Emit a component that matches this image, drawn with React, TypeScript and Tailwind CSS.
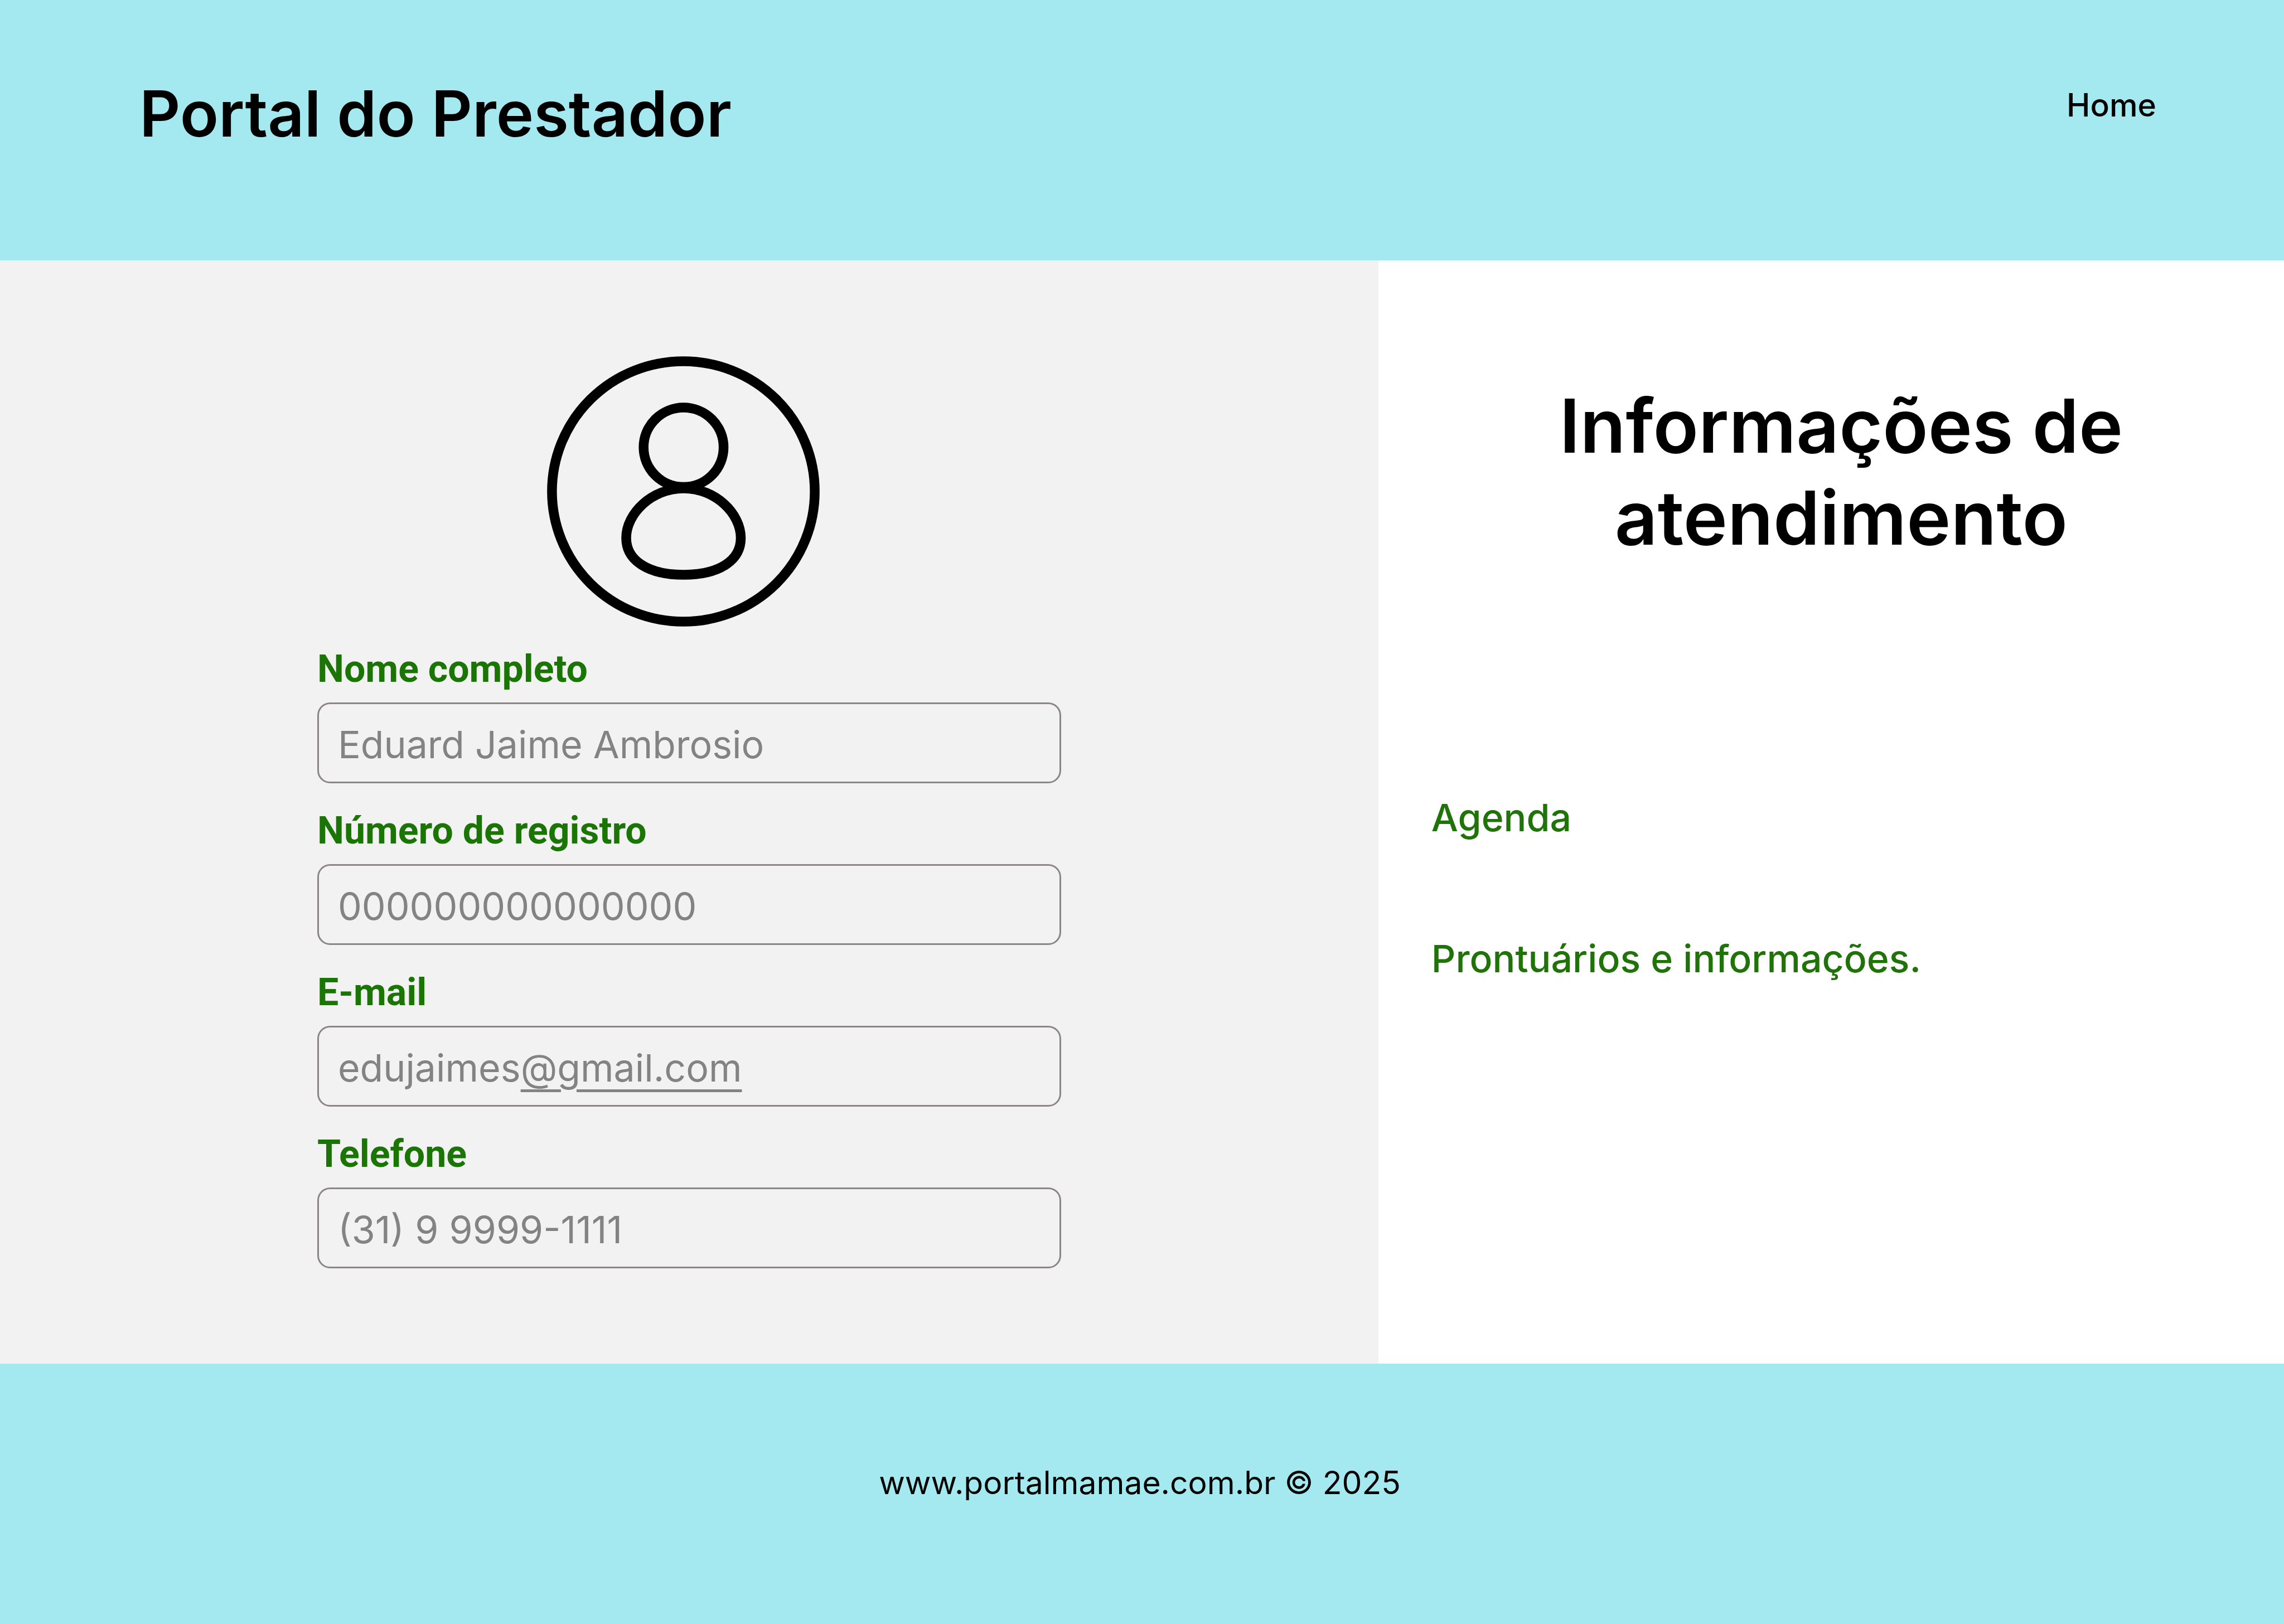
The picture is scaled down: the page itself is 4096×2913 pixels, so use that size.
type FieldProps = {
  id: string;
  label: string;
  value: string;
  type?: string;
  suffix?: string;
};

function UserIcon() {
  return (
    <svg
      viewBox="0 0 489 485"
      className="mr-5 h-[485px] w-[489px]"
      fill="none"
      stroke="#000"
      strokeWidth="17.5"
      role="img"
      aria-label="Foto do prestador"
    >
      <ellipse cx="244.5" cy="242.5" rx="235.6" ry="233.6" />
      <ellipse cx="244.9" cy="163.3" rx="71.7" ry="71.2" />
      <path d="M245 237C188 237 142 282 142 326C142 368 184 392 245 392C306 392 347.5 368 347.5 326C347.5 282 302 237 245 237Z" />
    </svg>
  );
}

function Field({ id, label, value, type = "text", suffix }: FieldProps) {
  return (
    <div className="flex w-full flex-col gap-5">
      <label
        htmlFor={id}
        className="font-[Roboto,sans-serif] text-[68px] leading-[80px] font-bold text-[#1b7505]"
      >
        {label}
      </label>
      <div className="flex h-[145px] items-center rounded-[23px] border-3 border-[#8b8585] px-[34px] pt-1 text-[68px] leading-[82px] text-[#838383]">
        <input
          id={id}
          type={type}
          defaultValue={value}
          className={
            suffix
              ? "[field-sizing:content] bg-transparent outline-none"
              : "w-full min-w-0 bg-transparent outline-none"
          }
        />
        {suffix && (
          <span className="underline decoration-[5px] underline-offset-[14px]">
            {suffix}
          </span>
        )}
      </div>
    </div>
  );
}

export default function App() {
  return (
    <div className="flex min-h-screen flex-col bg-white font-[Inter,sans-serif] text-black">
      <header className="flex items-start justify-between bg-[#a4e9ef] pt-[135px] pr-[229px] pb-[194px] pl-[250px]">
        <h1 className="text-[114px] leading-[138px] font-semibold">
          Portal do Prestador
        </h1>
        <nav className="mt-5">
          <a href="#" className="block text-[57px] leading-[68px] font-medium">
            Home
          </a>
        </nav>
      </header>

      <main className="grid flex-1 grid-cols-[869fr_571fr]">
        <section className="flex flex-col items-center bg-[#f2f2f2] px-10 pt-[172px]">
          <UserIcon />
          <form className="mt-9 flex w-full max-w-[1334px] flex-col gap-[45px]">
            <Field id="nome" label="Nome completo" value="Eduard Jaime Ambrosio" />
            <Field id="registro" label="Número de registro" value="000000000000000" />
            <Field id="email" label="E-mail" value="edujaimes" suffix="@gmail.com" />
            <Field id="telefone" label="Telefone" type="tel" value="(31) 9 9999-1111" />
          </form>
        </section>

        <section className="px-[95px] pt-[214px]">
          <h2 className="ml-9 text-center text-[134px] leading-[165px] font-semibold">
            Informações de
            <br />
            atendimento
          </h2>
          <nav className="mt-[414px] flex flex-col items-start gap-[171px] text-[68px] leading-[82px] font-medium text-[#1f7308]">
            <a href="#">Agenda</a>
            <a href="#">Prontuários e informações.</a>
          </nav>
        </section>
      </main>

      <footer className="bg-[#a4e9ef] pt-[180px] pr-2 pb-[219px] text-center text-[57px] leading-[68px]">
        www.portalmamae.com.br © 2025
      </footer>
    </div>
  );
}
